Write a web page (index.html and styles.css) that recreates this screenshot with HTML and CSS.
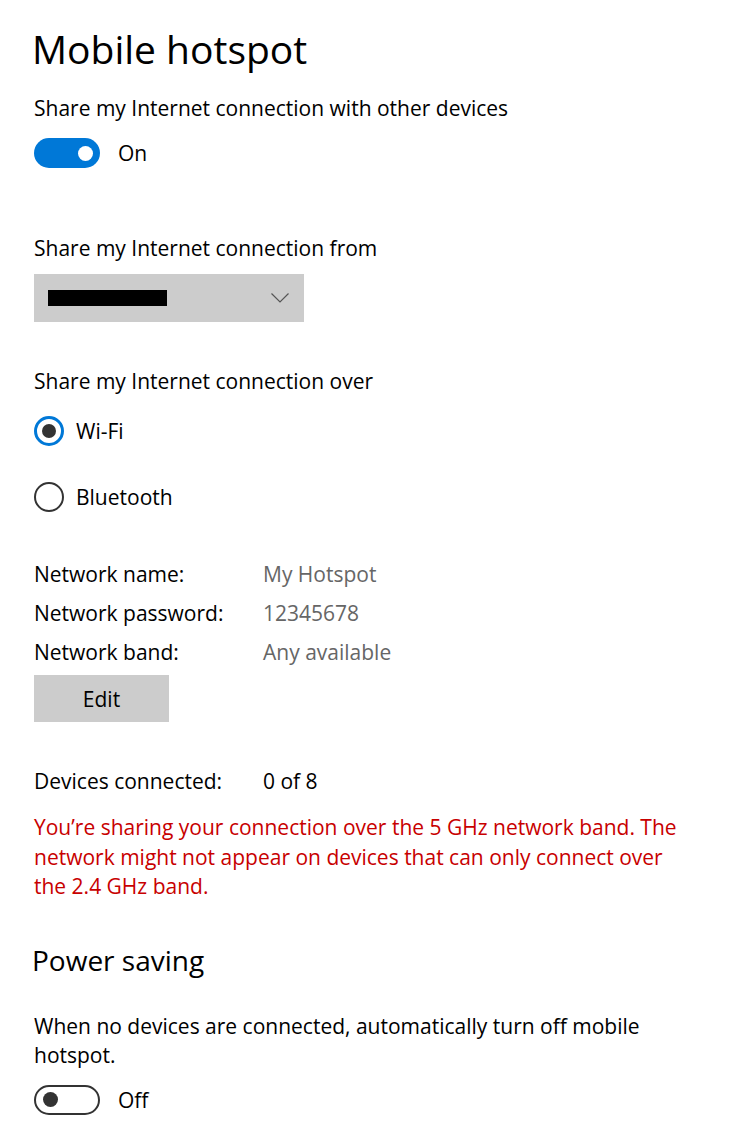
FILE: index.html
```html
<!DOCTYPE html>
<html>
<head>
<meta charset="utf-8">
<link rel="stylesheet" href="styles.css">
</head>
<body>
<div class="page">
  <h1 class="title">Mobile hotspot</h1>
  <div class="label l-share">Share my Internet connection with other devices</div>
  <div class="toggle-row r-on">
    <span class="toggle on"><span class="knob"></span></span>
    <span class="toggle-text">On</span>
  </div>

  <div class="label l-from">Share my Internet connection from</div>
  <div class="dropdown">
    <span class="redact"></span>
    <svg class="chev" width="18" height="10" viewBox="0 0 18 10"><path d="M0.5 0.5 L9 9 L17.5 0.5" fill="none" stroke="#555" stroke-width="1.2"/></svg>
  </div>

  <div class="label l-over">Share my Internet connection over</div>
  <div class="radio-row r-wifi">
    <span class="radio checked"><span class="dot"></span></span>
    <span class="radio-text">Wi-Fi</span>
  </div>
  <div class="radio-row r-bt">
    <span class="radio"></span>
    <span class="radio-text">Bluetooth</span>
  </div>

  <div class="info">
    <div class="info-row"><span class="k">Network name:</span><span class="v">My Hotspot</span></div>
    <div class="info-row"><span class="k">Network password:</span><span class="v">12345678</span></div>
    <div class="info-row"><span class="k">Network band:</span><span class="v">Any available</span></div>
  </div>
  <button class="edit">Edit</button>

  <div class="info-row devices"><span class="k">Devices connected:</span><span class="v dark">0 of 8</span></div>

  <p class="warn">You’re sharing your connection over the 5 GHz network band. The network might not appear on devices that can only connect over the 2.4 GHz band.</p>

  <h2 class="subtitle">Power saving</h2>
  <p class="desc">When no devices are connected, automatically turn off mobile hotspot.</p>
  <div class="toggle-row r-off">
    <span class="toggle off"><span class="knob"></span></span>
    <span class="toggle-text">Off</span>
  </div>
</div>
</body>
</html>
```

FILE: styles.css
```css
html, body {
  margin: 0;
  padding: 0;
  background: #ffffff;
}
body {
  font-family: "Open Sans", "Noto Sans", sans-serif;
  color: #000000;
  font-size: 21px;
}
.page {
  padding: 22px 34px 0 34px;
  display: flex;
  flex-direction: column;
  align-items: flex-start;
}
.title {
  margin: 0 0 0 -2px;
  font-weight: 400;
  font-size: 39px;
  line-height: 54px;
}
.label {
  line-height: 30px;
}
.l-share { margin-top: 17px; }
.toggle-row {
  display: flex;
  align-items: center;
  height: 30px;
}
.r-on { margin-top: 15px; }
.toggle {
  box-sizing: border-box;
  width: 66px;
  height: 30px;
  border-radius: 15px;
  display: flex;
  align-items: center;
  position: relative;
}
.toggle.on {
  background: #0078d7;
  justify-content: flex-end;
  padding-right: 7px;
}
.toggle.on .knob {
  width: 15px;
  height: 15px;
  border-radius: 50%;
  background: #ffffff;
}
.toggle.off {
  border: 2.5px solid #333333;
  padding-left: 7px;
}
.toggle.off .knob {
  width: 15px;
  height: 15px;
  border-radius: 50%;
  background: #333333;
}
.toggle-text {
  margin-left: 18px;
}
.l-from { margin-top: 65px; }
.dropdown {
  margin-top: 11px;
  width: 270px;
  height: 48px;
  background: #cccccc;
  display: flex;
  align-items: center;
  justify-content: space-between;
  padding: 0 15px 0 14px;
  box-sizing: border-box;
}
.redact {
  width: 119px;
  height: 16px;
  background: #000000;
}
.chev { display: block; }
.l-over { margin-top: 44px; }
.radio-row {
  display: flex;
  align-items: center;
  height: 30px;
}
.r-wifi { margin-top: 20px; }
.r-bt { margin-top: 36px; }
.radio {
  box-sizing: border-box;
  width: 30px;
  height: 30px;
  border-radius: 50%;
  border: 2.5px solid #333333;
  display: flex;
  align-items: center;
  justify-content: center;
}
.radio.checked { border: 3px solid #0078d7; }
.radio .dot {
  width: 14px;
  height: 14px;
  border-radius: 50%;
  background: #333333;
}
.radio-text { margin-left: 12px; }
.info { margin-top: 47px; display: flex; flex-direction: column; gap: 9px; }
.info-row {
  display: flex;
  line-height: 30px;
}
.info-row .k { width: 229px; }
.info-row .v { color: #666666; }
.info-row .v.dark { color: #000000; }
.edit {
  margin-top: 8px;
  width: 135px;
  height: 47px;
  border: none;
  background: #cccccc;
  font-family: inherit;
  font-size: 21px;
  color: #000;
  padding: 0;
}
.devices { margin-top: 44px; }
.warn {
  margin: 17px 0 0 0;
  color: #c80000;
  line-height: 29.5px;
  max-width: 660px;
}
.subtitle {
  margin: 38px 0 0 -2px;
  font-weight: 400;
  font-size: 28px;
  line-height: 40px;
}
.desc {
  margin: 32px 0 0 0;
  line-height: 29px;
  max-width: 640px;
}
.r-off { margin-top: 15px; }
```
